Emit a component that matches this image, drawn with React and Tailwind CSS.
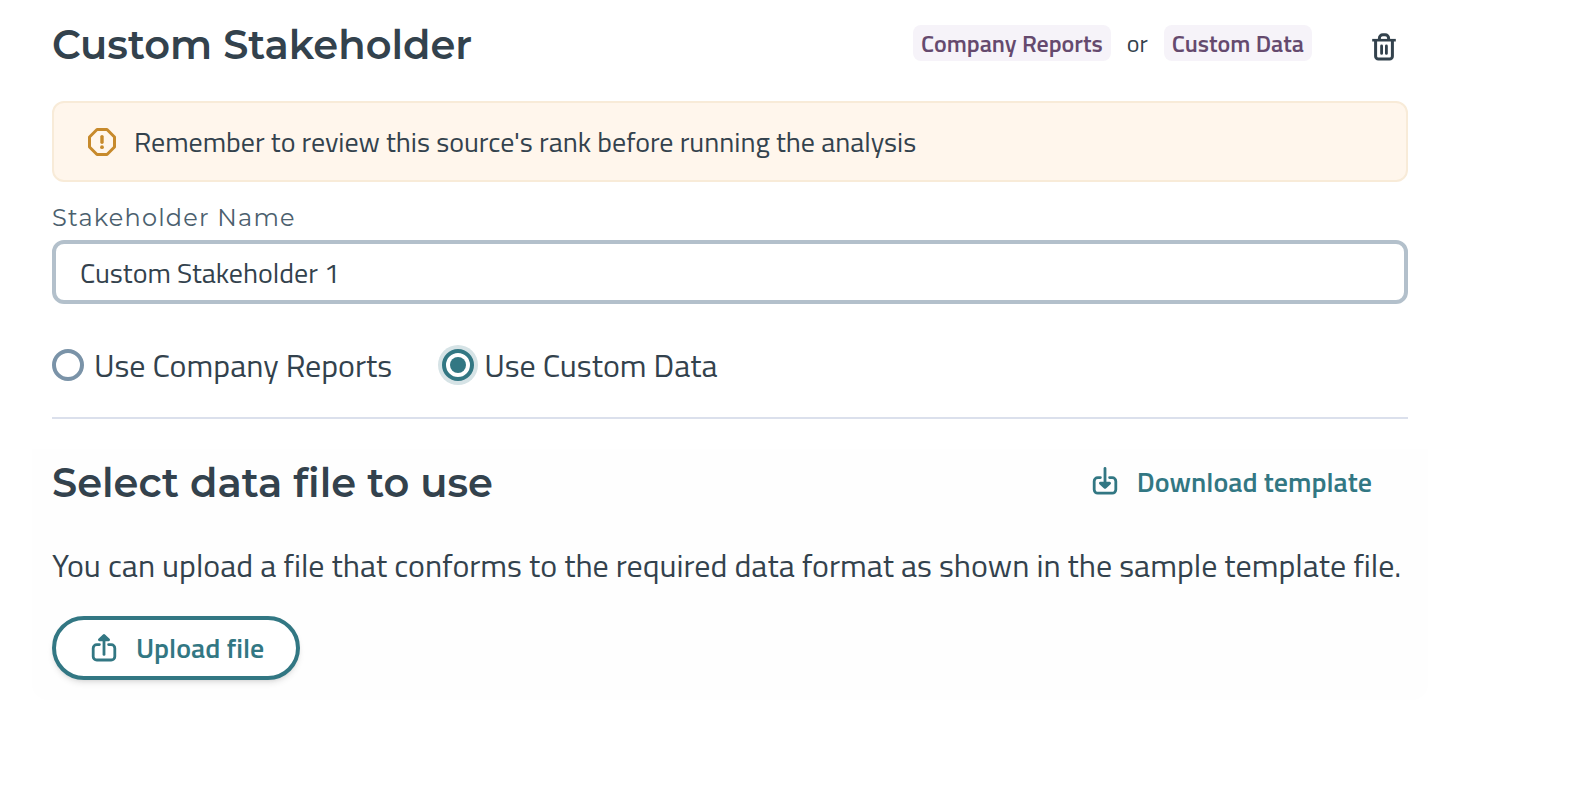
import { useState } from 'react'

function TrashIcon() {
  return (
    <svg viewBox="0 0 32 32" fill="none" stroke="currentColor" strokeWidth="3" strokeLinecap="round" strokeLinejoin="round" className="w-8 h-8">
      <path d="M4.2 8.2h23.6" strokeLinecap="butt" strokeWidth="2.6" />
      <path d="M7.6 9v15.2a2.8 2.8 0 0 0 2.8 2.8h11.2a2.8 2.8 0 0 0 2.8-2.8V9" />
      <path d="M11.4 7.6V6.2a3.4 3.4 0 0 1 3.4-3.4h2.4a3.4 3.4 0 0 1 3.4 3.4v1.4" />
      <path d="M13.6 14v7.4M18.4 14v7.4" strokeWidth="2.8" />
    </svg>
  )
}

function AlertIcon() {
  return (
    <svg viewBox="0 0 32 32" fill="none" stroke="currentColor" strokeWidth="3" className="w-8 h-8 shrink-0 text-[#c78a2c]">
      <path d="M11 3.5h10l7.5 7.5v10L21 28.5H11L3.5 21V11z" strokeLinejoin="round" />
      <path d="M16 10.6v5.6" strokeWidth="3.4" strokeLinecap="round" />
      <circle cx="16" cy="21.2" r="1.9" fill="currentColor" stroke="none" />
    </svg>
  )
}

function DownloadIcon() {
  return (
    <svg viewBox="0 0 32 32" fill="none" stroke="currentColor" strokeWidth="2.8" strokeLinecap="round" strokeLinejoin="round" className="w-8 h-8 shrink-0">
      <path d="M11.4 11.6H8.8a3.6 3.6 0 0 0-3.6 3.6v8.4a3.6 3.6 0 0 0 3.6 3.6h14.4a3.6 3.6 0 0 0 3.6-3.6v-8.4a3.6 3.6 0 0 0-3.6-3.6h-2.6" />
      <path d="M16 2.4v17.6" />
      <path d="M11.4 17.2l4.6 4.2 4.6-4.2z" fill="currentColor" />
    </svg>
  )
}

function UploadIcon() {
  return (
    <svg viewBox="0 0 32 32" fill="none" stroke="currentColor" strokeWidth="2.8" strokeLinecap="round" strokeLinejoin="round" className="w-8 h-8 shrink-0">
      <path d="M11.4 12.6H8.8a3.6 3.6 0 0 0-3.6 3.6v8.2A3.6 3.6 0 0 0 8.8 28h14.4a3.6 3.6 0 0 0 3.6-3.6v-8.2a3.6 3.6 0 0 0-3.6-3.6h-2.6" />
      <path d="M16 4v18.4" />
      <path d="M11.4 7.8L16 3.6l4.6 4.2z" fill="currentColor" />
    </svg>
  )
}

const SOURCES = [
  { id: 'reports', label: 'Use Company Reports' },
  { id: 'custom', label: 'Use Custom Data' },
]

function Chip({ children }) {
  return (
    <span className="rounded-lg bg-[#f6f3f9] px-2 text-2xl leading-9 font-semibold text-[#654a6e]">
      {children}
    </span>
  )
}

export default function App() {
  const [name, setName] = useState('Custom Stakeholder 1')
  const [source, setSource] = useState('custom')

  return (
    <main className="min-h-screen bg-white pt-5 pl-[52px] pr-[170px] font-['Titillium_Web',Roboto,sans-serif] text-[#33424d]">
      <header className="flex items-center justify-between">
        <h1 className="font-['Montserrat',Inter,sans-serif] text-[40px] leading-[50px] font-semibold">Custom Stakeholder</h1>
        <div className="flex items-center pr-2">
          <div className="mb-1 flex items-center gap-4">
            <Chip>Company Reports</Chip>
            <span className="text-2xl">or</span>
            <Chip>Custom Data</Chip>
          </div>
          <button type="button" aria-label="Delete stakeholder" className="mt-1.5 ml-14">
            <TrashIcon />
          </button>
        </div>
      </header>

      <div role="alert" className="mt-[31px] flex items-center gap-4 rounded-xl border-2 border-[#f8ebd8] bg-[#fff6ec] px-8 py-5 text-[28px] leading-[37px]">
        <AlertIcon />
        <p>Remember to review this source's rank before running the analysis</p>
      </div>

      <label htmlFor="stakeholder-name" className="mt-5 block font-['Montserrat',Inter,sans-serif] text-2xl leading-8 tracking-wider text-[#4b606e]">
        Stakeholder Name
      </label>
      <input
        id="stakeholder-name"
        type="text"
        value={name}
        onChange={(e) => setName(e.target.value)}
        className="mt-1.5 block h-16 w-full rounded-xl border-4 border-[#b3c0cb] bg-white px-6 text-[28px] outline-none"
      />

      <div role="radiogroup" aria-label="Data source" className="mt-10 flex gap-[50px]">
        {SOURCES.map((s) => (
          <label key={s.id} className="flex items-center gap-2.5 text-[32px] leading-[42px]">
            <input
              type="radio"
              name="source"
              checked={source === s.id}
              onChange={() => setSource(s.id)}
              className="size-8 shrink-0 appearance-none rounded-full border-4 border-[#7a93a8] bg-white checked:border-[#327783] checked:bg-[#327783] checked:bg-clip-content checked:p-1 checked:ring-4 checked:ring-[#d6e3e6]"
            />
            {s.label}
          </label>
        ))}
      </div>

      <hr className="mt-[31px] border-t-2 border-[#dbe0ec]" />

      <section className="-mx-5 mt-[30px] rounded-b-2xl bg-[#fefefe] px-5 pt-[9px] pb-5">
        <div className="flex items-center justify-between">
          <h2 className="font-['Montserrat',Inter,sans-serif] text-[40px] leading-[50px] font-semibold [font-variant-ligatures:none]">Select data file to use</h2>
          <a href="#template" className="mb-0.5 flex items-center gap-4 pr-9 text-[28px] leading-[42px] font-semibold text-[#327783]">
            <DownloadIcon />
            Download template
          </a>
        </div>
        <p className="mt-9 text-[32px] leading-[42px]">
          You can upload a file that conforms to the required data format as shown in the sample template file.
        </p>
        <button type="button" className="mt-[30px] flex h-16 items-center gap-4 rounded-full border-4 border-[#327783] bg-white px-8 text-[28px] font-semibold text-[#327783] shadow-md">
          <UploadIcon />
          Upload file
        </button>
      </section>
    </main>
  )
}
